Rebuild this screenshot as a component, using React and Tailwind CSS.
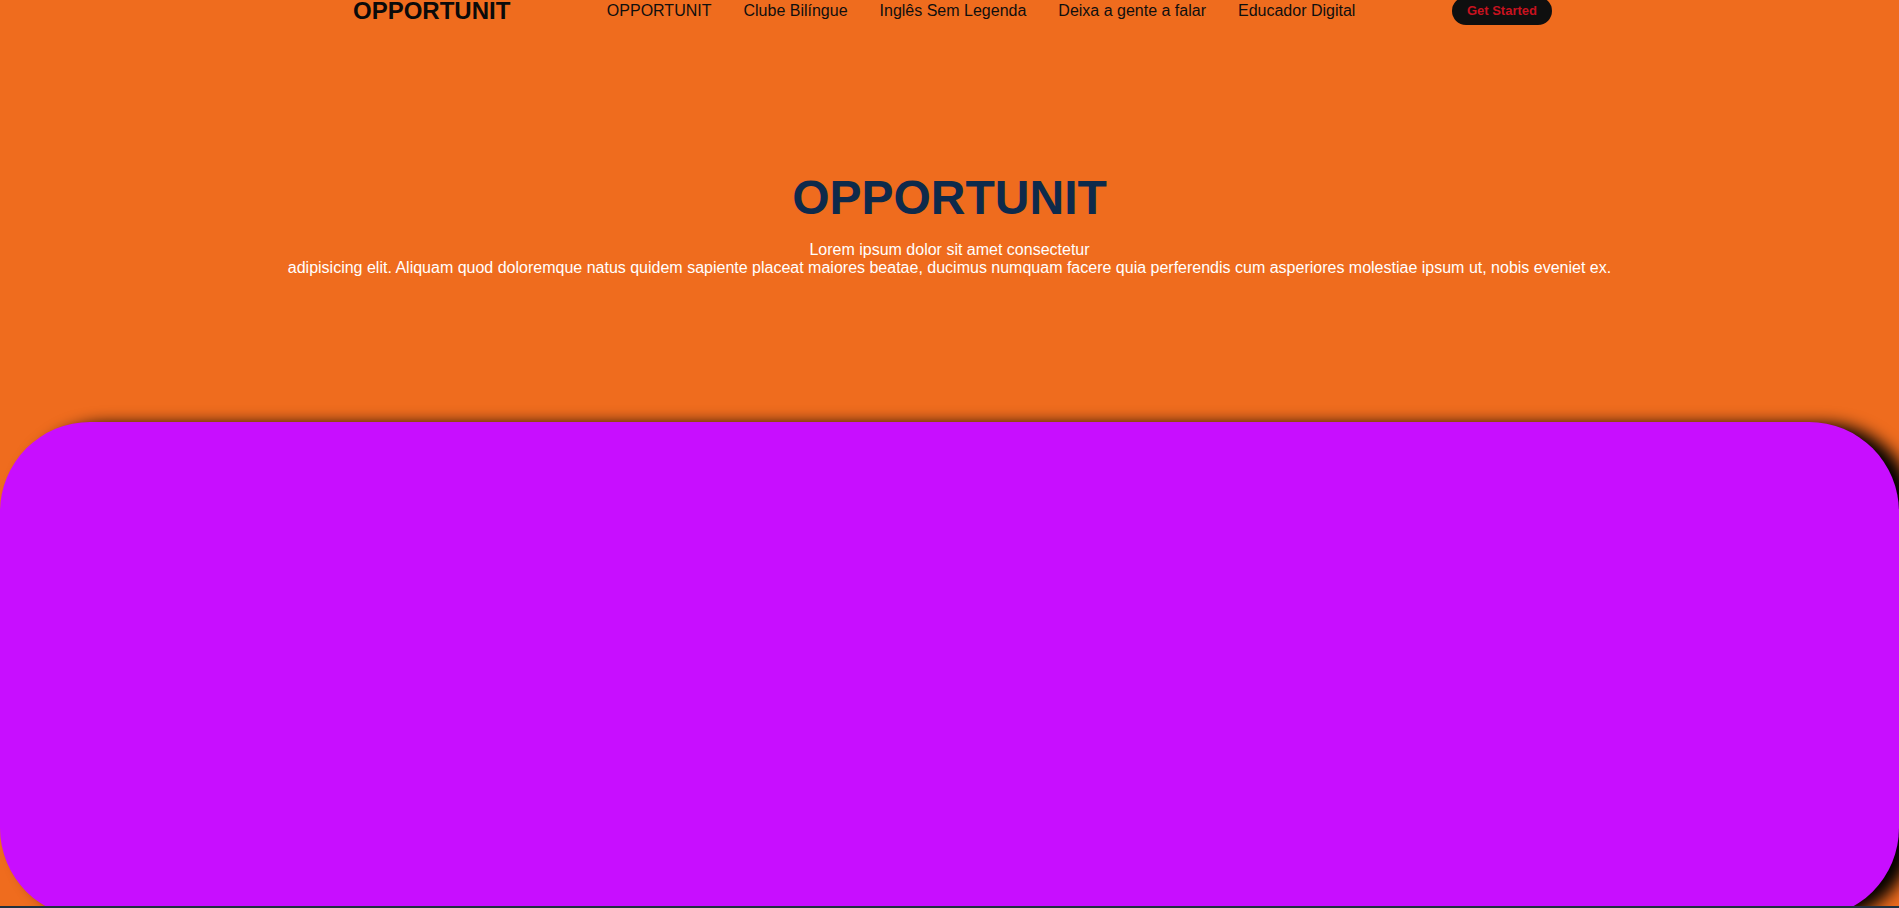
import React from "react";

const navLinks = [
  "OPPORTUNIT",
  "Clube Bilíngue",
  "Inglês Sem Legenda",
  "Deixa a gente a falar",
  "Educador Digital",
];

const App = () => {
  return (
    <div
      className="relative flex h-[908px] flex-col overflow-hidden bg-[#ef6c1e]"
      style={{ fontFamily: '"Liberation Sans", Arial, sans-serif' }}
    >
      {/* Header */}
      <header className="ml-[353px] flex h-[22px] w-[1199px] shrink-0 items-center justify-between">
        <span className="text-[24px] font-bold leading-[28px] text-[#0a0a0a]">OPPORTUNIT</span>
        <nav className="flex items-center gap-8">
          {navLinks.map((link) => (
            <a key={link} href="#" className="text-[16px] leading-[18px] text-[#0f0f0f]">
              {link}
            </a>
          ))}
        </nav>
        <button className="h-[28px] rounded-full bg-[#0f0f0f] px-[15px] text-[13px] font-bold text-[#c8121f]">
          Get Started
        </button>
      </header>

      {/* Hero */}
      <section className="shrink-0 pt-[152px]">
        <h1 className="text-center text-[48px] font-bold leading-none text-[#0e2a4b]">OPPORTUNIT</h1>
        <p className="mt-[19px] text-center text-[16px] leading-[18px] text-white">
          Lorem ipsum dolor sit amet consectetur
          <br />
          adipisicing elit. Aliquam quod doloremque natus quidem sapiente placeat maiores beatae, ducimus numquam facere quia perferendis cum asperiores molestiae ipsum ut, nobis eveniet ex.
        </p>
      </section>

      {/* Card */}
      <div className="mt-[145px] h-[496px] w-full shrink-0 rounded-[90px] bg-[#c80eff] shadow-[16px_2px_16px_#000]"></div>

      <div className="absolute bottom-0 left-0 h-[2px] w-full bg-[#22303f]"></div>
    </div>
  );
};

export default App;
